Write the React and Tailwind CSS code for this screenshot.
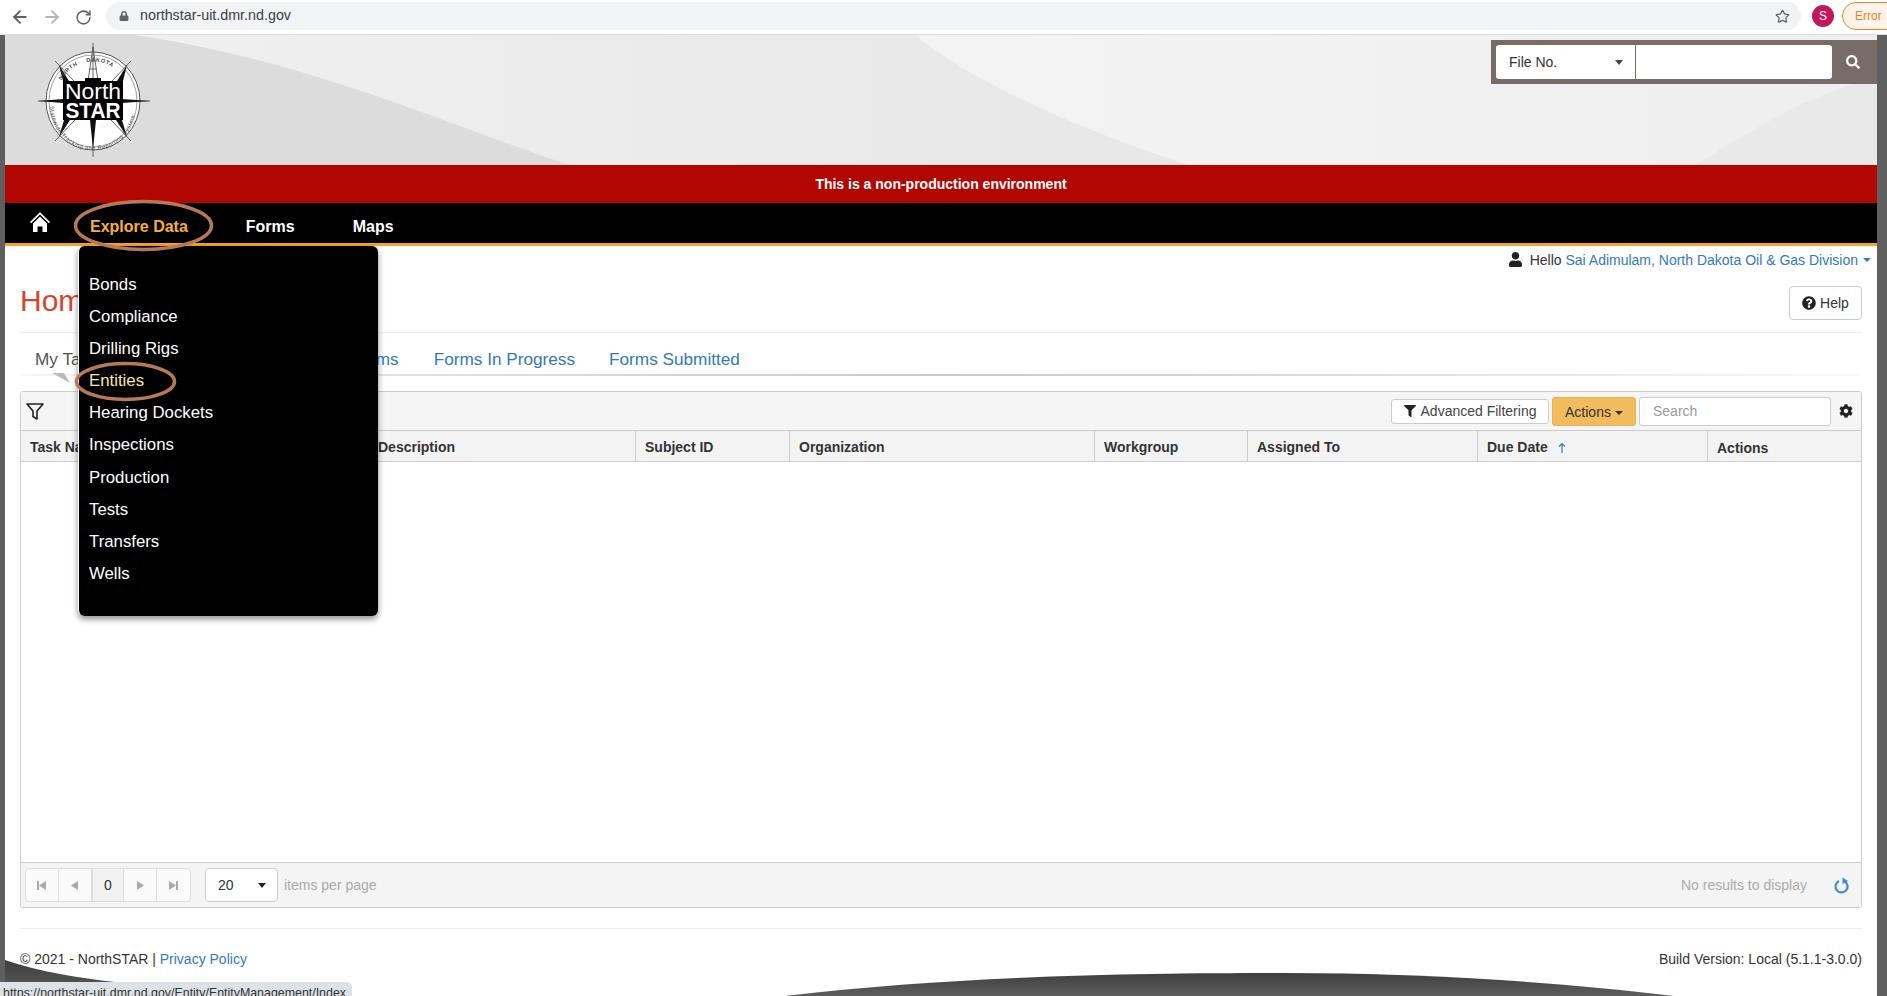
import React from "react";
import { ArrowLeft, ArrowRight, RotateCw, Star } from "lucide-react";
import { FaFilter, FaQuestionCircle, FaCog, FaUser, FaSearch, FaLock } from "react-icons/fa";

const menu = ["Bonds", "Compliance", "Drilling Rigs", "Entities", "Hearing Dockets", "Inspections", "Production", "Tests", "Transfers", "Wells"];
const cols = ["Task Name", "Description", "Subject ID", "Organization", "Workgroup", "Assigned To", "Due Date", "Actions"];

function BrowserBar() {
  return (
    <div className="h-[35px] shrink-0 bg-white border-b border-[#dadce0] flex items-center relative">
      <div className="flex items-center ml-[10px] gap-[12px] text-[#5f6368]">
        <ArrowLeft size={20} strokeWidth={2.2} />
        <ArrowRight size={20} strokeWidth={2.2} className="text-[#b4b6b9]" />
        <RotateCw size={17} strokeWidth={2.2} className="ml-[1px]" />
      </div>
      <div className="absolute left-[106px] top-[2px] h-[28px] w-[1695px] rounded-full bg-[#f1f3f4] flex items-center pl-[13px]">
        <FaLock size={10} className="text-[#5f6368]" />
        <span className="ml-[11px] text-[14.3px] text-[#3c4043]">northstar-uit.dmr.nd.gov</span>
        <Star size={15} strokeWidth={2} className="absolute right-[11px] text-[#5f6368]" />
      </div>
      <div className="absolute left-[1812px] top-[5px] w-[22px] h-[22px] rounded-full bg-[#c2185b] text-white text-[12px] flex items-center justify-center">S</div>
      <div className="absolute left-[1842px] top-[2px] w-[70px] h-[28px] rounded-l-full border border-[#e8842a] bg-[#fdf3e8] text-[#e8842a] text-[12px] flex items-center pl-[12px]">Error</div>
    </div>
  );
}

function Logo() {
  return (
    <svg width="120" height="122" viewBox="0 0 120 122" className="absolute left-[30px] top-[6px]">
      <defs>
        <path id="topArc" d="M24 44 A37 39 0 0 1 92 44" />
        <path id="botArc" d="M15 64 A43 45 0 0 0 101 64" />
      </defs>
      <ellipse cx="58" cy="60" rx="47" ry="49" fill="#fff" stroke="#555" strokeWidth="1" />
      <ellipse cx="58" cy="60" rx="44" ry="46" fill="#fff" stroke="#777" strokeWidth="0.7" />
      <g stroke="#555" strokeWidth="0.9" fill="none">
        <path d="M58 2V116M3 60H115M20 20L96 100M96 20L20 100" />
        <path d="M53 40L58 6L63 40M54.5 28H61.5M55.5 20H60.5" />
      </g>
      <path d="M3 60L28 58L28 62ZM115 60L87 58L87 62ZM24 24L34 40H28ZM92 24L82 40H88ZM24 96L35 79H29ZM92 96L81 79H87ZM58 108L55 79L61 79Z" fill="#111" />
      <text fontFamily="'Liberation Sans', sans-serif" fontSize="5.5" fill="#444" fontWeight="700" letterSpacing="0.7"><textPath href="#topArc" startOffset="6%" xmlSpace="preserve">NORTH    DAKOTA</textPath></text>
      <text fontFamily="'Liberation Sans', sans-serif" fontSize="5.6" fill="#444" letterSpacing="0.55"><textPath href="#botArc" startOffset="1%">Statewide Tracking and Reporting System</textPath></text>
      <path d="M28 40H50V37H66V40H88V79H28Z" fill="#000" />
      <text x="58" y="58" textAnchor="middle" fontFamily="'Liberation Sans', sans-serif" fontSize="22" fill="#fff" textLength="56" lengthAdjust="spacingAndGlyphs">North</text>
      <text x="58" y="77" textAnchor="middle" fontFamily="'Liberation Sans', sans-serif" fontSize="22" fontWeight="700" fill="#fff" textLength="55" lengthAdjust="spacingAndGlyphs">STAR</text>
    </svg>
  );
}

function Header() {
  return (
    <div className="h-[130px] relative shrink-0 bg-[#dcdcdc] overflow-hidden">
      <svg width="1872" height="130" className="absolute inset-0">
        <defs>
          <linearGradient id="mid" x1="0" y1="0" x2="1" y2="0">
            <stop offset="0" stopColor="#f0f0f0" />
            <stop offset="0.5" stopColor="#e8e8e8" />
            <stop offset="1" stopColor="#e8e8e8" />
          </linearGradient>
          <linearGradient id="far" x1="0" y1="0" x2="1" y2="0">
            <stop offset="0" stopColor="#f3f3f3" />
            <stop offset="1" stopColor="#efefef" />
          </linearGradient>
        </defs>
        <path d="M130 0C300 25 430 85 564 130H1872V0Z" fill="url(#mid)" />
        <path d="M910 0C970 50 1090 100 1183 130H1872V0Z" fill="url(#far)" />
        <path d="M1872 42C1800 60 1740 100 1690 130H1872Z" fill="#e9e9e9" />
      </svg>
      <Logo />
      <div className="absolute right-0 top-[5px] w-[386px] h-[44px] bg-[#776d66] flex items-center pl-[5px]">
        <div className="w-[139px] h-[34px] bg-white rounded-l-[3px] flex items-center justify-between pl-[13px] pr-[12px] text-[14px] text-[#333]">
          <span>File No.</span>
          <span className="w-0 h-0 border-x-[4px] border-x-transparent border-t-[5px] border-t-[#444]" />
        </div>
        <div className="w-[196px] h-[34px] bg-white rounded-r-[3px] ml-[1px]" />
        <FaSearch size={14} className="text-white ml-[14px]" />
      </div>
    </div>
  );
}

function Nav() {
  return (
    <div className="h-[43px] shrink-0 bg-black border-b-[3px] border-[#f5a623] flex items-center font-bold text-[16px] text-white pl-[25px]">
      <svg width="20" height="22" viewBox="0 0 20 22" className="-mt-[2px]" fill="#fff">
        <path d="M10 1L0 11l1.2 1.3L10 3.6l8.8 8.7L20 11z" />
        <path d="M3 12.5L10 5.5l7 7V21h-4.5v-5.5h-5V21H3z" />
      </svg>
      <span className="ml-[40px] mt-[7px] text-[#f7b032]">Explore Data</span>
      <span className="ml-[58px] mt-[7px]">Forms</span>
      <span className="ml-[58px] mt-[7px]">Maps</span>
    </div>
  );
}

function Tabs() {
  return (
    <div className="h-[43px] relative flex items-center text-[17.2px] text-[#337ab7] pl-[15px] pt-[10px]">
      <span className="text-[#555]">My Tasks</span>
      <span className="ml-[216px]">My Forms</span>
      <span className="ml-[35px]">Forms In Progress</span>
      <span className="ml-[34px]">Forms Submitted</span>
      <div className="absolute left-0 right-0 bottom-0 h-[2px] bg-gradient-to-r from-[#f5f5f5] via-[#c8c8c8] to-[#f8f8f8]" />
      <svg width="24" height="12" className="absolute left-[32px] -bottom-[9px]">
        <path d="M0 0L18 10L12 0Z" fill="#bbb" />
      </svg>
    </div>
  );
}

function Toolbar() {
  return (
    <div className="h-[39px] shrink-0 bg-[#f5f5f5] border-b border-[#ccc] flex items-center pl-[5px]">
      <svg width="18" height="18" viewBox="0 0 18 18" fill="none" stroke="#222" strokeWidth="1.6" strokeLinejoin="round">
        <path d="M1 2h16l-6 7v8l-4-2.5V9z" />
      </svg>
      <div className="ml-auto flex items-center">
        <div className="w-[158px] h-[25px] bg-white border border-[#ccc] rounded-[3px] flex items-center justify-center gap-[5px] text-[14px] text-[#444]">
          <FaFilter size={12} className="text-[#222]" />
          <span>Advanced Filtering</span>
        </div>
        <div className="ml-[3px] w-[84px] h-[29px] bg-[#f0bc5e] border border-[#eeb04d] rounded-[3px] flex items-center justify-center gap-[4px] text-[14px] text-[#333] pt-[3px]">
          <span>Actions</span>
          <span className="w-0 h-0 border-x-[4px] border-x-transparent border-t-[4px] border-t-[#333]" />
        </div>
        <div className="ml-[3px] w-[192px] h-[29px] bg-white border border-[#ccc] rounded-[3px] flex items-center pl-[13px] text-[14px] text-[#999]">Search</div>
        <FaCog size={14} className="ml-[8px] mr-[8px] text-[#222]" />
      </div>
    </div>
  );
}

function TableHead() {
  return (
    <div className="h-[31px] shrink-0 bg-[#f3f3f3] border-b border-[#ccc] grid grid-cols-[347px_267px_154px_305px_153px_230px_230px_1fr] text-[14px] font-bold text-[#333]">
      {cols.map((c, i) => (
        <div key={c} className={"flex items-center pl-[9px] " + (c === "Actions" ? "pt-[4px] " : "pt-[3px] ") + (i > 0 ? "border-l border-[#ccc]" : "")}>
          <span>{c}</span>
          {c === "Due Date" && (
            <svg width="8" height="12" viewBox="0 0 8 12" className="ml-[10px]" fill="none" stroke="#337ab7" strokeWidth="1.2">
              <path d="M4 11V1.5M1 4.5L4 1.5L7 4.5" />
            </svg>
          )}
        </div>
      ))}
    </div>
  );
}

function PagerCell({ children, active }) {
  return (
    <div className={"w-[33px] h-full flex items-center justify-center border-r last:border-r-0 border-[#ddd] " + (active ? "bg-[#f2f2f2] border-l border-[#ccc] text-[14px] text-[#333]" : "")}>
      {children}
    </div>
  );
}

function PanelFooter() {
  return (
    <div className="h-[45px] shrink-0 bg-[#f4f4f4] border-t border-[#ccc] flex items-center pl-[4px] text-[14px] text-[#aaa]">
      <div className="w-[166px] h-[34px] bg-[#fafafa] border border-[#ddd] rounded-[4px] flex overflow-hidden">
        <PagerCell><svg width="9" height="9" viewBox="0 0 9 9" fill="#aaa"><path d="M0 0h2v9H0zM9 0v9L2 4.5z" /></svg></PagerCell>
        <PagerCell><svg width="7" height="9" viewBox="0 0 7 9" fill="#aaa"><path d="M7 0v9L0 4.5z" /></svg></PagerCell>
        <PagerCell active>0</PagerCell>
        <PagerCell><svg width="7" height="9" viewBox="0 0 7 9" fill="#aaa"><path d="M0 0v9l7-4.5z" /></svg></PagerCell>
        <PagerCell><svg width="9" height="9" viewBox="0 0 9 9" fill="#aaa"><path d="M9 0H7v9h2zM0 0v9l7-4.5z" /></svg></PagerCell>
      </div>
      <div className="ml-[14px] w-[73px] h-[34px] bg-white border border-[#ccc] rounded-[4px] flex items-center justify-between pl-[12px] pr-[11px] text-[#333]">
        <span>20</span>
        <span className="w-0 h-0 border-x-[4px] border-x-transparent border-t-[5px] border-t-[#222]" />
      </div>
      <span className="ml-[6px]">items per page</span>
      <span className="ml-auto">No results to display</span>
      <svg width="16" height="17" viewBox="0 0 16 17" className="ml-[27px] mr-[11px]" fill="none">
        <path d="M10.5 4.2A6 6 0 1 1 5 4" stroke="#3d8bd4" strokeWidth="2.2" />
        <path d="M8.5 0.5L14 4L8.5 7Z" fill="#3d8bd4" />
      </svg>
    </div>
  );
}

function Content() {
  return (
    <div className="flex-1 bg-white px-[15px]">
      <div className="h-[28px] -mr-[9px] flex items-center justify-end text-[14px] text-[#333]">
        <FaUser size={15} className="mr-[7px] -mt-[1px] text-[#222]" />
        <span>Hello&nbsp;</span>
        <span className="text-[#337ab7]">Sai Adimulam, North Dakota Oil &amp; Gas Division</span>
        <span className="ml-[5px] w-0 h-0 border-x-[4px] border-x-transparent border-t-[4px] border-t-[#337ab7]" />
      </div>
      <div className="h-[58px] border-b border-[#eee] box-content flex items-start justify-between">
        <span className="text-[30px] leading-[54px] text-[#d9432c]">Home</span>
        <div className="mt-[12px] w-[73px] h-[34px] border border-[#ccc] rounded-[4px] flex items-center justify-center gap-[4px] text-[14px] text-[#333]">
          <FaQuestionCircle size={14} className="text-[#222]" />
          <span>Help</span>
        </div>
      </div>
      <Tabs />
      <div className="mt-[15px] h-[517px] border border-[#ccc] rounded-[3px] flex flex-col overflow-hidden">
        <Toolbar />
        <TableHead />
        <div className="flex-1 bg-white" />
        <PanelFooter />
      </div>
      <div className="mt-[20px] border-t border-[#eee]" />
      <div className="mt-[20px] flex justify-between text-[14px] text-[#333]">
        <span>© 2021 - NorthSTAR | <span className="text-[#337ab7]">Privacy Policy</span></span>
        <span>Build Version: Local (5.1.1-3.0.0)</span>
      </div>
    </div>
  );
}

function Overlays() {
  return (
    <>
      <div className="absolute left-[78px] top-[246px] w-[300px] h-[370px] bg-black border-l border-white rounded-[6px] shadow-[0_3px_6px_rgba(0,0,0,0.45)] pt-[22px] pl-[10px] text-[16.8px] text-white">
        {menu.map((m) => (
          <div key={m} className={"h-[32.2px] flex items-center " + (m === "Entities" ? "text-[#fde3a7]" : "")}>{m}</div>
        ))}
      </div>
      <svg width="1887" height="996" className="absolute inset-0 pointer-events-none">
        <defs>
          <linearGradient id="sw" x1="0" y1="0" x2="0" y2="1">
            <stop offset="0" stopColor="#3e3e3e" />
            <stop offset="1" stopColor="#5e5e5e" />
          </linearGradient>
        </defs>
        <ellipse cx="143.5" cy="225.5" rx="68" ry="24" fill="none" stroke="#b87a56" strokeWidth="3.5" />
        <ellipse cx="125.5" cy="381.5" rx="49" ry="18" fill="none" stroke="#b87a56" strokeWidth="3.5" />
        <path d="M5 960C40 972 80 978 115 982L115 996H5Z" fill="url(#sw)" />
        <path d="M785 996C960 975 1150 973 1283 973C1420 973 1560 982 1674 996Z" fill="url(#sw)" />
      </svg>
      <div className="absolute left-0 bottom-0 w-[352px] h-[14px] bg-[#dee1e6] rounded-tr-[5px] overflow-hidden pl-[3px] pt-[3px] text-[12.4px] leading-[16px] text-[#333] whitespace-nowrap">
        https://northstar-uit.dmr.nd.gov/Entity/EntityManagement/Index
      </div>
    </>
  );
}

export default function App() {
  return (
    <div className="w-[1887px] h-[996px] relative overflow-hidden flex flex-col bg-white font-['Liberation_Sans',Arial,sans-serif]">
      <BrowserBar />
      <div className="flex-1 flex min-h-0">
        <div className="w-[5px] shrink-0 bg-[#5f5f5f]" />
        <div className="flex-1 min-w-0 flex flex-col">
          <Header />
          <div className="h-[38px] shrink-0 bg-[#b20600] flex items-center justify-center text-[14px] font-bold text-white">This is a non-production environment</div>
          <Nav />
          <Content />
        </div>
        <div className="w-[10px] shrink-0 bg-[#5f5f5f]" />
      </div>
      <Overlays />
    </div>
  );
}
